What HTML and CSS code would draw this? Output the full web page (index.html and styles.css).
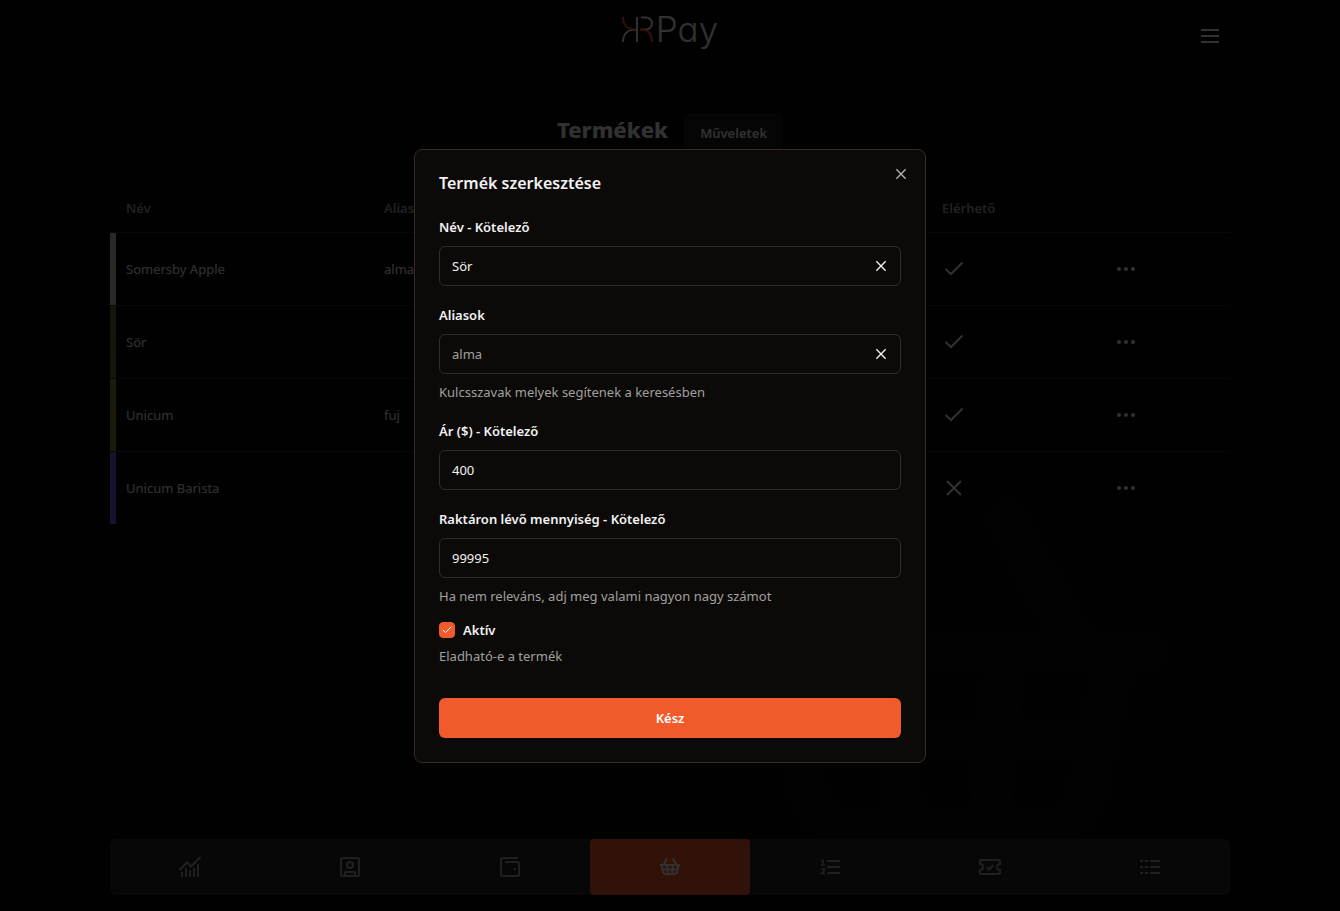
FILE: index.html
```html
<!DOCTYPE html>
<html lang="hu">
<head>
<meta charset="utf-8">
<meta name="viewport" content="width=device-width, initial-scale=1">
<title>KRPay – Termékek</title>
<link rel="stylesheet" href="styles.css">
</head>
<body>
<svg class="defs" aria-hidden="true">
  <symbol id="check" viewBox="0 0 24 24"><path d="M3.500 12 9 17 20.500 5.500"/></symbol>
  <symbol id="cross" viewBox="0 0 24 24"><path d="M5 5 19 19M19 5 5 19"/></symbol>
  <symbol id="dots" viewBox="0 0 24 24"><g fill="currentColor" stroke="none"><circle cx="5" cy="12" r="2"/><circle cx="12" cy="12" r="2"/><circle cx="19" cy="12" r="2"/></g></symbol>
  <symbol id="basket" viewBox="0 0 24 24"><path d="M2 10H22M9 3.5 5.4 10M15 3.5 18.6 10M3.5 10 5 17Q5.6 19 7.5 19H16.5Q18.4 19 19 17L20.5 10M9.1 10 9.9 19M14.9 10 14.1 19M4.5 14.5H19.5"/></symbol>
</svg>

<div class="page">
  <svg class="watermark" aria-hidden="true"><use href="#basket"/></svg>

  <header class="topbar">
    <a class="logo" href="#" aria-label="KRPay">
      <svg class="logo-mark" viewBox="0 0 32 28" aria-hidden="true">
        <path d="M1 27C1 19 6 14.500 14 14.500M15 2V27M19 2.500H24A6 6 0 0 1 24 14.500H19"/>
        <path class="accent" d="M1 2C1 10 6 14.500 14 14.500M18 14.500C26 14.500 30 19 30 27"/>
      </svg>
      <span class="logo-text">Pay</span>
    </a>
    <button class="menu-button" type="button" aria-label="Menü">
      <svg class="icon" viewBox="0 0 24 24"><path d="M3 6H21M3 12H21M3 18H21"/></svg>
    </button>
  </header>

  <main class="content">
    <div class="heading">
      <h1>Termékek</h1>
      <button class="actions" type="button">Műveletek</button>
    </div>
    <table class="products">
      <colgroup><col class="col-name"><col class="col-alias"><col class="col-state"><col class="col-menu"></colgroup>
      <thead>
        <tr><th>Név</th><th>Aliasok</th><th>Elérhető</th><td></td></tr>
      </thead>
      <tbody>
        <tr><td class="tag sand">Somersby Apple</td><td>alma</td><td><svg class="icon"><use href="#check"/></svg></td><td><button class="row-menu" type="button" aria-label="Somersby Apple menü"><svg class="icon"><use href="#dots"/></svg></button></td></tr>
        <tr><td class="tag olive">Sör</td><td></td><td><svg class="icon"><use href="#check"/></svg></td><td><button class="row-menu" type="button" aria-label="Sör menü"><svg class="icon"><use href="#dots"/></svg></button></td></tr>
        <tr><td class="tag lime">Unicum</td><td>fuj</td><td><svg class="icon"><use href="#check"/></svg></td><td><button class="row-menu" type="button" aria-label="Unicum menü"><svg class="icon"><use href="#dots"/></svg></button></td></tr>
        <tr><td class="tag violet">Unicum Barista</td><td></td><td><svg class="icon"><use href="#cross"/></svg></td><td><button class="row-menu" type="button" aria-label="Unicum Barista menü"><svg class="icon"><use href="#dots"/></svg></button></td></tr>
      </tbody>
    </table>
  </main>

  <nav class="tabs">
    <a href="#" aria-label="Statisztika"><svg class="icon" viewBox="0 0 24 24"><path d="M1.500 15 9 7.500 13 11.500 22.500 2M4 17V22M8 13V22M12 15V22M16 13V22M20 9V22"/></svg></a>
    <a href="#" aria-label="Profil"><svg class="icon" viewBox="0 0 24 24"><rect x="3" y="3" width="18" height="18" rx="1.500"/><circle cx="12" cy="10" r="3"/><path d="M7 21V18Q7 17 8 17H16Q17 17 17 18V21"/></svg></a>
    <a href="#" aria-label="Pénztárca"><svg class="icon" viewBox="0 0 24 24"><path d="M20 3H4.500Q3 3 3 4.500V19.500Q3 21 4.500 21H19.500Q21 21 21 19.500V8.500Q21 7 19.500 7H7M16 14H18"/></svg></a>
    <a class="active" href="#" aria-label="Termékek" aria-current="page"><svg class="icon"><use href="#basket"/></svg></a>
    <a href="#" aria-label="Sorrend"><svg class="icon" viewBox="0 0 24 24"><path d="M9 6H22M9 12H22M9 18H22"/><path class="thin" d="M3 5.500H5V10M3 10H7M3 14H6V16L3.500 18.500H7"/></svg></a>
    <a href="#" aria-label="Jegyek"><svg class="icon" viewBox="0 0 24 24"><path d="M2 9V6.500Q2 5 3.500 5H20.500Q22 5 22 6.500V9A3 3 0 0 0 22 15V17.500Q22 19 20.500 19H3.500Q2 19 2 17.500V15A3 3 0 0 0 2 9ZM8.500 12 11 14.500 15.500 10"/></svg></a>
    <a href="#" aria-label="Lista"><svg class="icon" viewBox="0 0 24 24"><path d="M2 6H5M7 6H10M12 6H22M2 12H5M7 12H10M12 12H22M2 18H5M7 18H10M12 18H22"/></svg></a>
  </nav>
</div>

<div class="overlay">
  <section class="dialog" role="dialog" aria-modal="true" aria-labelledby="dialog-title">
    <button class="close" type="button" aria-label="Bezárás"><svg class="icon"><use href="#cross"/></svg></button>
    <h2 id="dialog-title">Termék szerkesztése</h2>
    <form class="form">
      <div class="field">
        <label for="name">Név - Kötelező</label>
        <div class="control"><input id="name" type="text" value="Sör"><button class="clear" type="button" aria-label="Név törlése"><svg class="icon"><use href="#cross"/></svg></button></div>
      </div>
      <div class="field">
        <label for="aliases">Aliasok</label>
        <div class="control"><input id="aliases" type="text" placeholder="alma"><button class="clear" type="button" aria-label="Aliasok törlése"><svg class="icon"><use href="#cross"/></svg></button></div>
        <p>Kulcsszavak melyek segítenek a keresésben</p>
      </div>
      <div class="field">
        <label for="price">Ár ($) - Kötelező</label>
        <div class="control"><input id="price" type="text" inputmode="numeric" value="400"></div>
      </div>
      <div class="stock-group">
        <div class="field">
          <label for="stock">Raktáron lévő mennyiség - Kötelező</label>
          <div class="control"><input id="stock" type="text" inputmode="numeric" value="99995"></div>
          <p>Ha nem releváns, adj meg valami nagyon nagy számot</p>
        </div>
        <div class="field">
          <div class="check-row">
            <span class="checkbox"><input id="active" type="checkbox" checked><svg class="icon" aria-hidden="true"><use href="#check"/></svg></span>
            <label for="active">Aktív</label>
          </div>
          <p>Eladható-e a termék</p>
        </div>
      </div>
      <button class="submit" type="submit">Kész</button>
    </form>
  </section>
</div>
</body>
</html>
```
FILE: styles.css
```css
:root {
  --bg: #0c0a09;
  --text: #f2f2f2;
  --muted: #a1a09f;
  --line: #392826;
  --accent: #f15a2b;
}

* { box-sizing: border-box; }

body {
  margin: 0;
  background: #080808;
  color: var(--text);
  font: 13px/20px "Segoe UI", "Noto Sans", sans-serif;
}

h1, h2, p { margin: 0; }

button, input { font: inherit; color: inherit; }
button { border: 0; padding: 0; background: none; cursor: pointer; }

.defs { position: absolute; width: 0; height: 0; }

.icon {
  display: block;
  width: 24px;
  height: 24px;
  fill: none;
  stroke: currentColor;
  stroke-width: 2;
}

.thin { stroke-width: 1.5; }

.page {
  position: relative;
  display: flex;
  flex-direction: column;
  min-height: 100vh;
  max-width: 1120px;
  margin: 0 auto;
  padding-bottom: 16px;
}

.watermark {
  position: absolute;
  right: 43px;
  bottom: -20px;
  width: 480px;
  height: 480px;
  fill: none;
  stroke: #0e0e0e;
  stroke-width: 2;
  stroke-linecap: round;
}

.topbar {
  display: grid;
  grid-template-columns: 1fr auto 1fr;
  align-items: center;
  height: 72px;
}

.logo {
  grid-column: 2;
  display: flex;
  align-items: center;
  gap: 2px;
  height: 58px;
  align-self: start;
  color: var(--text);
  text-decoration: none;
}

.logo-mark { width: 32px; height: 28px; fill: none; stroke: currentColor; stroke-width: 2; }
.logo-mark .accent { stroke: var(--accent); }
.logo-text { font: 300 35px/40px Inter, "Open Sans", sans-serif; font-feature-settings: "cv11"; }

.menu-button { justify-self: end; margin-right: 8px; }

.content { position: relative; flex: 1; padding-top: 41px; }

.heading { display: flex; justify-content: center; gap: 16px; }
.heading h1 { font-size: 22px; line-height: 32px; font-weight: 800; }

.actions {
  height: 40px;
  padding: 0 16px;
  border-radius: 6px;
  background: #1c1c1c;
  font-weight: 600;
}

.products {
  width: 100%;
  margin-top: 31px;
  border-collapse: collapse;
  table-layout: fixed;
}

.col-name { width: 258px; }
.col-state { width: 172px; }
.col-menu { width: 132px; }

.products th {
  height: 48px;
  padding: 0 16px;
  text-align: left;
  font-weight: 600;
  color: var(--muted);
}

.products tbody tr { border-top: 1px solid #262626; }
.products tbody td { height: 73px; padding: 0 16px; }
.products .tag { background: linear-gradient(var(--tag), var(--tag)) left / 6px 100% no-repeat; }

.sand { --tag: #d6cdc8; }
.olive { --tag: #696e32; }
.lime { --tag: #878c23; }
.violet { --tag: #7360eb; }

.row-menu { display: block; }

.tabs {
  position: relative;
  display: grid;
  grid-template-columns: repeat(7, 1fr);
  height: 56px;
  border-radius: 6px;
  background: #242424;
}

.tabs a {
  display: grid;
  place-items: center;
  border-radius: 4px;
  color: #a0a0a0;
}

.tabs a.active { background: var(--accent); color: var(--text); }

.overlay {
  position: fixed;
  inset: 0;
  display: grid;
  place-items: center;
  background: rgba(0, 0, 0, 0.8);
}

.dialog {
  position: relative;
  width: 512px;
  max-width: 100%;
  padding: 24px;
  border: 1px solid var(--line);
  border-radius: 8px;
  background: var(--bg);
}

.dialog h2 { font-size: 16px; line-height: 18px; font-weight: 600; }

.close {
  position: absolute;
  top: 16px;
  right: 16px;
  color: #b0b0b0;
}

.close .icon, .clear .icon { width: 16px; height: 16px; }

.form { display: grid; gap: 18px; margin-top: 24px; }
.field { display: grid; gap: 8px; }
.field label { line-height: 22px; font-weight: 600; }
.field p { color: var(--muted); }

.stock-group { display: grid; gap: 16px; }

.control {
  display: flex;
  align-items: center;
  height: 40px;
  border: 1px solid var(--line);
  border-radius: 6px;
}

.control input {
  flex: 1;
  min-width: 0;
  height: 100%;
  padding: 0 12px;
  border: 0;
  outline: 0;
  background: transparent;
}

.control input::placeholder { color: var(--muted); opacity: 1; }

.clear { margin-right: 11px; }

.check-row { display: flex; align-items: center; gap: 8px; height: 16px; }

.checkbox { position: relative; display: block; width: 16px; height: 16px; }

.checkbox input {
  appearance: none;
  display: block;
  width: 16px;
  height: 16px;
  margin: 0;
  border: 1px solid var(--accent);
  border-radius: 4px;
}

.checkbox input:checked { background: var(--accent); }

.checkbox .icon {
  position: absolute;
  inset: 2px;
  width: 12px;
  height: 12px;
  color: #ffffff;
  pointer-events: none;
}

.submit {
  height: 40px;
  margin-top: 14px;
  border-radius: 6px;
  background: var(--accent);
  color: #ffffff;
  font-weight: 600;
}
```
